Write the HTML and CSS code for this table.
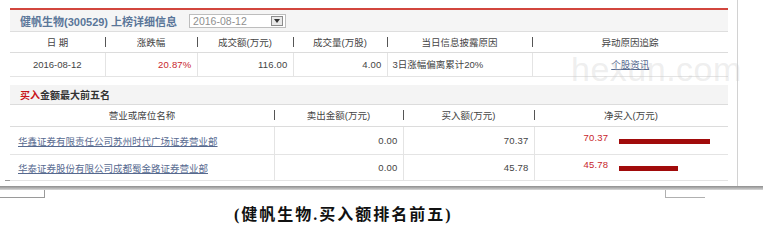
FILE: index.html
```html
<!DOCTYPE html>
<html lang="zh-CN">
<head>
<meta charset="utf-8">
<title>健帆生物 上榜详细信息</title>
<link rel="stylesheet" href="styles.css">
</head>
<body>
<div class="page">
  <div class="frame">
    <div class="panel">
      <div class="titlebar">
        <span class="title">健帆生物(300529) 上榜详细信息</span>
        <span class="select">
          <span class="sel-text">2016-08-12</span>
          <span class="sel-btn"><svg width="6" height="4" viewBox="0 0 6 4"><path d="M0 0H6L3 4Z" fill="#333"/></svg></span>
        </span>
      </div>
      <table class="t1">
        <colgroup><col class="c1"><col class="c2"><col class="c3"><col class="c4"><col class="c5"><col class="c6"></colgroup>
        <thead>
          <tr><th>日 期</th><th>涨跌幅</th><th>成交额(万元)</th><th>成交量(万股)</th><th>当日信息披露原因</th><th>异动原因追踪</th></tr>
        </thead>
        <tbody>
          <tr>
            <td class="ctr">2016-08-12</td>
            <td class="num red">20.87%</td>
            <td class="num">116.00</td>
            <td class="num">4.00</td>
            <td class="lft">3日涨幅偏离累计20%</td>
            <td class="ctr"><a class="link" href="#">个股资讯</a></td>
          </tr>
        </tbody>
      </table>
      <div class="section"><span class="red">买入</span>金额最大前五名</div>
      <table class="t2">
        <colgroup><col class="d1"><col class="d2"><col class="d3"><col class="d4"></colgroup>
        <thead>
          <tr><th>营业或席位名称</th><th>卖出金额(万元)</th><th>买入额(万元)</th><th>净买入(万元)</th></tr>
        </thead>
        <tbody>
          <tr>
            <td class="lft"><a class="link" href="#">华鑫证券有限责任公司苏州时代广场证券营业部</a></td>
            <td class="num">0.00</td>
            <td class="num">70.37</td>
            <td class="net"><span class="netval">70.37</span><span class="netbar" style="width:91px"></span></td>
          </tr>
          <tr>
            <td class="lft"><a class="link" href="#">华泰证券股份有限公司成都蜀金路证券营业部</a></td>
            <td class="num">0.00</td>
            <td class="num">45.78</td>
            <td class="net"><span class="netval">45.78</span><span class="netbar" style="width:59px"></span></td>
          </tr>
        </tbody>
      </table>
    </div>
    <div class="watermark" aria-hidden="true">hexun.com</div>
    <span class="tick"></span>
  </div>
  <div class="bar"></div>
  <div class="marks"><span class="mark-left"></span><span class="mark-right"></span></div>
  <p class="caption">(健帆生物.买入额排名前五)</p>
</div>
</body>
</html>
```
FILE: styles.css
```css
* { box-sizing: border-box; }
html, body { margin: 0; padding: 0; background: #fff; }
body {
  font-family: "Liberation Sans", "Noto Sans CJK SC", sans-serif;
  font-size: 9.5px;
  color: #444;
}
.page { width: 763px; height: 243px; overflow: hidden; }

.frame {
  position: relative;
  width: 738px;
  height: 186px;
  padding: 8px 0 0 10px;
  border-right: 1px solid #d2d2d2;
}
.panel {
  width: 718px;
  border-top: 2px solid #d2463e;
}

.titlebar {
  height: 22px;
  background: #f5f5f5;
  border-bottom: 1px solid #dedede;
  display: flex;
  align-items: center;
  padding-left: 10px;
}
.title {
  font-weight: bold;
  font-size: 11px;
  color: #5a7699;
}
.select {
  margin-left: 12px;
  width: 97px;
  height: 14px;
  border: 1px solid #bdbdbd;
  background: #fff;
  display: flex;
  align-items: center;
  justify-content: space-between;
  padding: 0 2px 0 3px;
}
.sel-text { color: #8f8f8f; font-size: 10.5px; line-height: 12px; }
.sel-btn {
  width: 12px;
  height: 10px;
  border: 1px solid #8c8c8c;
  background: #e9e9e9;
  display: flex;
  align-items: center;
  justify-content: center;
}

table { border-collapse: collapse; table-layout: fixed; width: 718px; }
.c1 { width: 95px; } .c2 { width: 92px; } .c3 { width: 96px; }
.c4 { width: 94px; } .c5 { width: 145px; } .c6 { width: 196px; }
.d1 { width: 264px; } .d2 { width: 129px; } .d3 { width: 131px; } .d4 { width: 194px; }

th {
  font-weight: normal;
  font-size: 9.5px;
  color: #444;
  height: 20px;
  padding: 0;
  text-align: center;
  border-bottom: 1px solid #dcdcdc;
}
th + th {
  background: linear-gradient(#555, #555) no-repeat left 0 center / 1px 10px;
}
td {
  height: 24px;
  padding: 0 5px;
  border-bottom: 1px solid #e4e4e4;
  color: #444;
  white-space: nowrap;
}
td + td { border-left: 1px solid #e4e4e4; }
.ctr { text-align: center; }
.num { text-align: right; letter-spacing: 0.2px; }
.lft { text-align: left; padding-left: 5px; }
.red { color: #c8262b; }
.link { color: #56698f; text-decoration: underline; }

.t2 th { height: 22px; }
.t2 td { height: 28px; }
.t2 tbody tr:last-child td { height: 26px; }
.t2 .lft { padding-left: 8px; }

.section {
  margin-top: 8px;
  height: 20px;
  background: #f4f4f4;
  border-bottom: 1px solid #dcdcdc;
  display: flex;
  align-items: center;
  padding-left: 10px;
  font-weight: bold;
  font-size: 10px;
  color: #333;
}
.section .red { color: #c8141a; }

.net { padding-left: 49px; }
.netval { color: #c8262b; position: relative; top: -3px; letter-spacing: 0.2px; }
.netbar {
  display: inline-block;
  height: 5px;
  margin-left: 11px;
  background: #a10b0b;
  vertical-align: middle;
}

.watermark {
  position: absolute;
  left: 571px;
  top: 50px;
  font-family: "Liberation Sans", sans-serif;
  font-size: 34px;
  color: rgba(200, 200, 200, 0.3);
  letter-spacing: 0.5px;
  pointer-events: none;
  user-select: none;
}
.tick {
  position: absolute;
  left: 5px;
  top: 180px;
  width: 5px;
  height: 1px;
  background: #999;
}

.bar {
  width: 763px;
  height: 4px;
  background: linear-gradient(#8e8e8e, #b8b8b8 60%, #dadada);
}
.marks { display: flex; height: 8px; }
.mark-left { width: 45px; height: 8px; border-right: 1px solid #9a9a9a; border-bottom: 1px solid #9a9a9a; }
.mark-right { margin-left: 620px; width: 40px; height: 8px; border-left: 1px solid #b0b0b0; border-bottom: 1px solid #b0b0b0; }

.caption {
  margin: 6px 0 0 234px;
  font-family: "Liberation Serif", "Noto Sans CJK SC", serif;
  font-weight: bold;
  font-size: 16px;
  line-height: 22px;
  color: #111;
  letter-spacing: 2px;
}
```
